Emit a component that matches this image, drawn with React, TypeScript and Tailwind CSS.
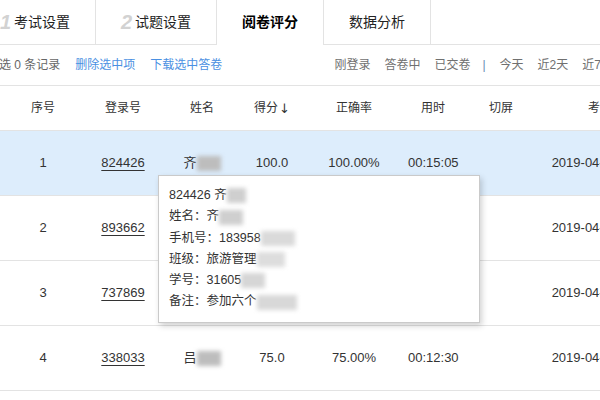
import React from 'react';

const cols = 'grid grid-cols-[86px_74px_84px_56px_108px_50px_86px_136px]';

type Row = {
    no: number;
    id: string;
    surname: string;
    score: string;
    rate: string;
    time: string;
    date: string;
    active?: boolean;
};

const rows: Row[] = [
    { no: 1, id: '824426', surname: '齐', score: '100.0', rate: '100.00%', time: '00:15:05', date: '2019-04-10 09:30:25', active: true },
    { no: 2, id: '893662', surname: '王', score: '95.0', rate: '95.00%', time: '00:14:20', date: '2019-04-10 09:30:31' },
    { no: 3, id: '737869', surname: '李', score: '85.0', rate: '85.00%', time: '00:13:42', date: '2019-04-10 09:31:02' },
    { no: 4, id: '338033', surname: '吕', score: '75.0', rate: '75.00%', time: '00:12:30', date: '2019-04-10 09:31:17' },
];

const Blur = ({ className }: { className: string }) => (
    <span className={`inline-block h-[15px] align-middle blur-[2px] ${className}`} />
);

const Tab = ({ num, label, className, active }: { num?: string; label: string; className: string; active?: boolean }) => (
    <div
        className={`flex h-[45px] shrink-0 items-center justify-center gap-[3px] border-r border-[#e3e3e3] ${active ? '' : 'border-b'} ${className}`}
    >
        {num && <span className="font-['Liberation_Sans',sans-serif] text-[20px] font-bold italic text-[#d2d2d2]">{num}</span>}
        <span className={`text-[14px] ${active ? 'font-bold text-black' : 'text-[#222]'}`}>{label}</span>
    </div>
);

export default function App() {
    return (
        <div className="relative h-[400px] w-[600px] overflow-hidden bg-white font-['Liberation_Sans','Noto_Sans_CJK_SC',sans-serif] text-[#333]">
            {/* tabs */}
            <div className="flex w-[700px]">
                <Tab num="1" label="考试设置" className="-ml-[25px] w-[121px]" />
                <Tab num="2" label="试题设置" className="w-[121px]" />
                <Tab label="阅卷评分" className="w-[107px]" active />
                <Tab label="数据分析" className="w-[107px]" />
                <div className="h-[45px] flex-1 border-b border-[#e3e3e3]" />
            </div>

            {/* toolbar */}
            <div className="flex h-[41px] w-[700px] items-center border-b border-[#e3e3e3] text-[12px] whitespace-nowrap">
                <div className="-ml-[13px] flex items-center gap-[15px]">
                    <span className="text-[#666]">已选 0 条记录</span>
                    <span className="text-[#4a90e2]">删除选中项</span>
                    <span className="text-[#4a90e2]">下载选中答卷</span>
                </div>
                <div className="ml-[112px] flex items-center gap-[14px] text-[#707070]">
                    <span>刚登录</span>
                    <span>答卷中</span>
                    <span>已交卷</span>
                    <span className="-ml-[2px] text-[#6b8bb3]">|</span>
                    <span>今天</span>
                    <span>近2天</span>
                    <span>近7天</span>
                    <span>全部</span>
                </div>
            </div>

            {/* table header */}
            <div className={`${cols} h-[45px] w-[700px] items-center border-b border-[#e3e3e3] text-center text-[12px] text-[#333]`}>
                <span>序号</span>
                <span>登录号</span>
                <span>姓名</span>
                <span className="flex items-center justify-center">
                    得分<span className="ml-[1px] font-['DejaVu_Sans',sans-serif] text-[13px] leading-none">↓</span>
                </span>
                <span>正确率</span>
                <span>用时</span>
                <span>切屏</span>
                <span>考试时间</span>
            </div>

            {/* rows */}
            {rows.map((r) => (
                <div
                    key={r.no}
                    className={`${cols} h-[65px] w-[700px] items-center border-b border-[#e3e3e3] text-center text-[13px] text-[#333] ${r.active ? 'bg-[#ddedfc]' : 'bg-white'}`}
                >
                    <span>{r.no}</span>
                    <span className="underline underline-offset-[3px]">{r.id}</span>
                    <span className="whitespace-nowrap">
                        {r.surname}
                        <Blur className="w-[24px] bg-[#bdbdbd]" />
                    </span>
                    <span>{r.score}</span>
                    <span>{r.rate}</span>
                    <span>{r.time}</span>
                    <span />
                    <span className="whitespace-nowrap">{r.date}</span>
                </div>
            ))}

            {/* hover card */}
            <div className="absolute left-[158px] top-[175px] h-[148px] w-[322px] border border-[#cacaca] bg-white px-[10px] py-[9px] text-[12.5px] leading-[21.3px] text-[#333] shadow-[2px_3px_6px_rgba(0,0,0,0.18)]">
                <div>
                    824426 齐<Blur className="w-[19px] bg-[#cfcfcf]" />
                </div>
                <div>
                    姓名：齐<Blur className="w-[24px] bg-[#cfcfcf]" />
                </div>
                <div>
                    手机号：183958<Blur className="w-[34px] bg-[#dadada]" />
                </div>
                <div>
                    班级：旅游管理<Blur className="w-[28px] bg-[#dddddd]" />
                </div>
                <div>
                    学号：31605<Blur className="w-[24px] bg-[#d6d6d6]" />
                </div>
                <div>
                    备注：参加六个<Blur className="w-[40px] bg-[#d8d8d8]" />
                </div>
            </div>
        </div>
    );
}
